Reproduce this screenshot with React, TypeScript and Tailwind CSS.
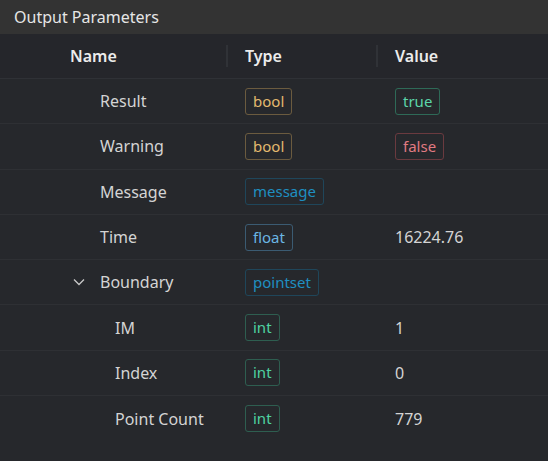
import * as React from "react";

type Tone = "bool" | "message" | "float" | "int" | "pointset" | "true" | "false";

type Param = {
  name: string;
  type: Tone;
  value?: string;
  valueTone?: Tone;
  depth: number;
  expandable?: boolean;
};

const PARAMS: Param[] = [
  { name: "Result", type: "bool", value: "true", valueTone: "true", depth: 0 },
  { name: "Warning", type: "bool", value: "false", valueTone: "false", depth: 0 },
  { name: "Message", type: "message", depth: 0 },
  { name: "Time", type: "float", value: "16224.76", depth: 0 },
  { name: "Boundary", type: "pointset", depth: 0, expandable: true },
  { name: "IM", type: "int", value: "1", depth: 1 },
  { name: "Index", type: "int", value: "0", depth: 1 },
  { name: "Point Count", type: "int", value: "779", depth: 1 },
];

const badgeTone: Record<Tone, string> = {
  bool: "border-[#6b5b3f] text-[#e3b96f]",
  true: "border-[#2e6a57] text-[#5cd5a9]",
  false: "border-[#6a3a3f] text-[#e07a82]",
  message: "border-[#1f465a] text-[#1f8fc1]",
  pointset: "border-[#1f465a] text-[#1f8fc1]",
  float: "border-[#3b5b72] text-[#6bb6e3]",
  int: "border-[#2e5e50] text-[#4fd3a2]",
};

function Badge({ tone, children }: { tone: Tone; children: React.ReactNode }) {
  return (
    <span
      className={`inline-flex h-[27px] items-center rounded-[3px] border px-[7px] text-[15px] leading-none ${badgeTone[tone]}`}
    >
      {children}
    </span>
  );
}

function Chevron() {
  return (
    <svg
      className="absolute left-[-27px] top-1/2 -translate-y-1/2"
      width="12"
      height="8"
      viewBox="0 0 12 8"
      fill="none"
    >
      <path d="M1 1.5 6 6.5 11 1.5" stroke="#c8c8c8" strokeWidth="1.3" />
    </svg>
  );
}

export default function App() {
  return (
    <div
      className="h-[461px] w-[548px] overflow-hidden bg-[#26282c] text-[16px] text-[#d4d4d4]"
      style={{ fontFamily: '"Noto Sans", "Open Sans", sans-serif' }}
    >
      <div className="flex h-[34px] items-center bg-[#333333] px-[14px] text-[#e6e6e6] shadow-[0_1px_2px_rgba(0,0,0,0.35)]">
        Output Parameters
      </div>

      <div className="grid h-[45px] grid-cols-[228px_150px_1fr] items-center border-b border-[#2f3136] bg-[#25262b] font-semibold text-[#ececec]">
        <div className="relative pl-[70px]">
          Name
          <span className="absolute right-0 top-1/2 h-[22px] w-[2px] -translate-y-1/2 bg-[#303237]" />
        </div>
        <div className="relative pl-[17px]">
          Type
          <span className="absolute right-0 top-1/2 h-[22px] w-[2px] -translate-y-1/2 bg-[#303237]" />
        </div>
        <div className="pl-[17px]">Value</div>
      </div>

      {PARAMS.map((p) => (
        <div
          key={p.name}
          className="grid h-[45.3px] grid-cols-[228px_150px_1fr] items-center border-b border-[#2e3034] last:border-b-0"
        >
          <div className={p.depth === 0 ? "pl-[100px]" : "pl-[115px]"}>
            <span className="relative">
              {p.expandable ? <Chevron /> : null}
              {p.name}
            </span>
          </div>
          <div className="pl-[17px]">
            <Badge tone={p.type}>{p.type}</Badge>
          </div>
          <div className="pl-[17px]">
            {p.value ? (
              p.valueTone ? (
                <Badge tone={p.valueTone}>{p.value}</Badge>
              ) : (
                <span>{p.value}</span>
              )
            ) : null}
          </div>
        </div>
      ))}
    </div>
  );
}
